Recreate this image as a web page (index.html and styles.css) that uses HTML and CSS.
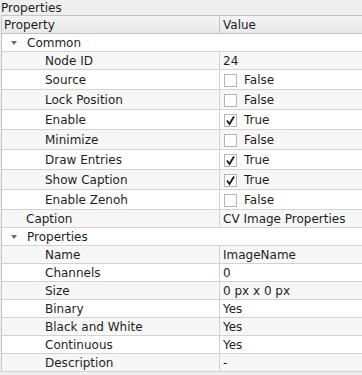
FILE: index.html
```html
<!DOCTYPE html>
<html lang="en">
<head>
    <meta charset="UTF-8">
    <title>Properties</title>
    <link rel="stylesheet" href="styles.css">
</head>
<body>
    <div class="dock-title">Properties</div>
    <div class="tree">
        <div class="row header">
            <div class="name">Property</div>
            <div class="value">Value</div>
        </div>
        <div class="row group">
            <div class="name"><span class="arrow"></span>Common</div>
        </div>
        <div class="row">
            <div class="name child">Node ID</div>
            <div class="value">24</div>
        </div>
        <div class="row check">
            <div class="name child">Source</div>
            <div class="value"><span class="box"></span>False</div>
        </div>
        <div class="row check">
            <div class="name child">Lock Position</div>
            <div class="value"><span class="box"></span>False</div>
        </div>
        <div class="row check">
            <div class="name child">Enable</div>
            <div class="value"><span class="box checked"><svg viewBox="0 0 11 11"><path d="M2 5.5 L4.5 9 L9 1.5"/></svg></span>True</div>
        </div>
        <div class="row check">
            <div class="name child">Minimize</div>
            <div class="value"><span class="box"></span>False</div>
        </div>
        <div class="row check">
            <div class="name child">Draw Entries</div>
            <div class="value"><span class="box checked"><svg viewBox="0 0 11 11"><path d="M2 5.5 L4.5 9 L9 1.5"/></svg></span>True</div>
        </div>
        <div class="row check">
            <div class="name child">Show Caption</div>
            <div class="value"><span class="box checked"><svg viewBox="0 0 11 11"><path d="M2 5.5 L4.5 9 L9 1.5"/></svg></span>True</div>
        </div>
        <div class="row check">
            <div class="name child">Enable Zenoh</div>
            <div class="value"><span class="box"></span>False</div>
        </div>
        <div class="row">
            <div class="name top">Caption</div>
            <div class="value">CV Image Properties</div>
        </div>
        <div class="row group">
            <div class="name"><span class="arrow"></span>Properties</div>
        </div>
        <div class="row">
            <div class="name child">Name</div>
            <div class="value">ImageName</div>
        </div>
        <div class="row">
            <div class="name child">Channels</div>
            <div class="value">0</div>
        </div>
        <div class="row">
            <div class="name child">Size</div>
            <div class="value">0 px x 0 px</div>
        </div>
        <div class="row">
            <div class="name child">Binary</div>
            <div class="value">Yes</div>
        </div>
        <div class="row">
            <div class="name child">Black and White</div>
            <div class="value">Yes</div>
        </div>
        <div class="row">
            <div class="name child">Continuous</div>
            <div class="value">Yes</div>
        </div>
        <div class="row">
            <div class="name child">Description</div>
            <div class="value">-</div>
        </div>
    </div>
</body>
</html>
```

FILE: styles.css
```css
body {
    margin: 0;
    background-color: #efefef;
    font-family: "DejaVu Sans", Verdana, sans-serif;
    font-size: 12px;
    color: #1e1e1e;
}

.dock-title {
    height: 15px;
    line-height: 16px;
    padding-left: 1px;
}

.tree {
    margin-left: 1px;
    border-left: 1px solid #c4c4c4;
    border-top: 1px solid #c4c4c4;
    background-color: #ffffff;
    overflow: hidden;
}

.row {
    display: flex;
    box-sizing: border-box;
    height: 18px;
    padding-top: 1px;
    line-height: 17px;
    border-bottom: 1px solid #d2d2d2;
    background-color: #ffffff;
    white-space: nowrap;
}

.row:nth-child(odd) {
    background-color: #f7f7f7;
}

.row.check {
    height: 20px;
    line-height: 19px;
}

.row.header {
    background: linear-gradient(#f4f4f4, #e9e9e9);
    border-bottom: 1px solid #c4c4c4;
}

.name {
    width: 215px;
    padding-left: 2px;
    margin-top: -1px;
    border-right: 1px solid #d2d2d2;
    flex-shrink: 0;
}

.name,
.value {
    padding-top: 1px;
}

.header .name {
    border-right-color: #c4c4c4;
}

.name.child {
    width: 174px;
    padding-left: 43px;
}

.name.top {
    width: 193px;
    padding-left: 24px;
}

.group .name {
    width: auto;
    padding-left: 8px;
    border-right: none;
    display: flex;
    align-items: center;
}

.arrow {
    width: 0;
    height: 0;
    border-left: 3px solid transparent;
    border-right: 3px solid transparent;
    border-top: 4px solid #6a6a6a;
    margin-left: 1px;
    margin-right: 10px;
}

.value {
    padding-left: 3px;
    margin-top: -1px;
    display: flex;
    align-items: flex-start;
}

.box {
    width: 11px;
    height: 11px;
    border: 1px solid #b4b4b4;
    background-color: #ffffff;
    margin-left: 1px;
    margin-right: 7px;
    margin-top: 3px;
    flex-shrink: 0;
}

.box svg {
    display: block;
    width: 11px;
    height: 11px;
}

.box path {
    fill: none;
    stroke: #1a1a1a;
    stroke-width: 1.8;
}
```
